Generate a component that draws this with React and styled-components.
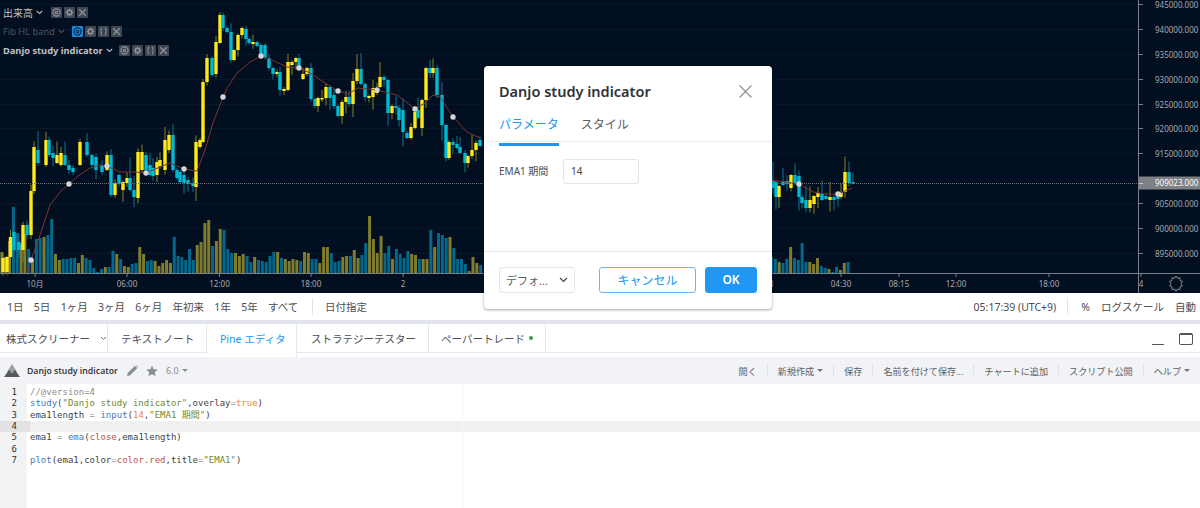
import React from "react";
import styled, { createGlobalStyle } from "styled-components";

const SANS = `"Noto Sans", "Noto Sans CJK JP", sans-serif`;
const MONO = `"DejaVu Sans Mono", "Noto Sans CJK JP", monospace`;

const Global = createGlobalStyle`
  html, body { margin: 0; padding: 0; background: #fff; }
  body { font-family: ${SANS}; overflow: hidden; }
  * { box-sizing: border-box; }
`;

/* [x, top, bottom, colour] read from the picture */
const CANDLES = [
  [3,258,272,"y"],[7,257,272,"y"],[10.5,237,257,"y"],[14,232,250,"c"],[19,242,250,"c"],[23,225,250,"y"],[27,225,235,"c"],[31,191,235,"y"],
  [34,147,191,"y"],[38,150,163,"c"],[46,140,165,"y"],[49,140,155,"c"],[53,153,158,"c"],[57,155,163,"y"],[61,153,165,"y"],[65,155,165,"c"],[69,165,170,"c"],[73,168,172,"c"],
  [80,142,165,"y"],[87,142,155,"c"],[92,155,165,"c"],[96,157,170,"c"],[102,165,172,"c"],[107,155,170,"y"],[111,155,195,"c"],[115,183,195,"y"],[119,175,184,"c"],[123,182,190,"y"],[127,178,183,"y"],[130,178,190,"c"],[134,190,197,"c"],
  [138,152,198,"y"],[142,152,170,"y"],[146,155,170,"c"],[150,165,175,"c"],[153,168,176,"c"],[157,162,175,"y"],[160,160,166,"y"],[165,140,170,"y"],[169,135,150,"y"],[173,135,170,"c"],[177,170,178,"c"],[180,172,182,"c"],[184,175,183,"c"],[188,180,184,"c"],[193,183,186,"c"],
  [196,142,187,"y"],[200,140,147,"y"],[203,82,142,"y"],[207,58,82,"y"],[212,58,75,"c"],[216,42,74,"y"],[220,15,43,"y"],[223,15,28,"c"],[227,28,32,"c"],[231,32,60,"c"],[234,50,60,"y"],[238,35,50,"y"],[242,28,35,"y"],[246,29,39,"c"],[249,39,43,"c"],[253,42,44,"y"],[257,42,46,"c"],[261,45,57,"c"],[265,45,58,"c"],[269,58,68,"c"],[273,68,74,"c"],[277,72,74,"y"],[280,72,90,"c"],[284,89,91,"y"],[288,62,90,"y"],[292,62,65,"y"],[296,58,62,"y"],[299,58,68,"c"],[303,74,79,"y"],[307,68,74,"y"],
  [311,68,99,"c"],[315,99,106,"c"],[318,98,106,"y"],[322,98,99,"y"],[326,87,98,"y"],[330,87,98,"c"],[334,95,106,"c"],[338,106,116,"c"],[342,102,116,"y"],[346,97,102,"y"],[349,97,104,"c"],[353,81,104,"y"],[357,69,81,"y"],[361,69,84,"c"],[365,84,97,"c"],[369,96,98,"y"],[373,88,97,"y"],[377,88,93,"y"],[380,77,87,"y"],[384,77,80,"c"],[388,80,113,"c"],[392,106,113,"y"],[396,106,108,"c"],[399,108,120,"c"],
  [403,110,132,"c"],[407,133,138,"c"],[411,127,138,"y"],[415,112,128,"y"],[418,110,118,"c"],[422,100,128,"y"],[426,68,100,"y"],[430,68,73,"c"],[433,68,73,"y"],[437,68,95,"c"],[442,95,125,"c"],[446,125,158,"c"],[449,142,158,"y"],[453,142,145,"c"],[457,144,148,"c"],[460,147,153,"c"],[465,153,163,"c"],[468,156,163,"y"],[472,150,156,"y"],[476,143,150,"y"],[480,140,146,"c"],
  [773,181,188,"c"],[776,182,197,"c"],[779,186,197,"y"],[783,181,185,"c"],[787,181,184,"c"],[791,175,188,"y"],[795,175,183,"c"],[799,176,197,"c"],[802,197,203,"c"],[806,200,208,"c"],[810,200,208,"y"],[814,196,204,"y"],[818,193,197,"y"],[822,194,200,"c"],[826,196,199,"c"],[830,197,200,"y"],[834,197,200,"c"],[838,196,199,"c"],[841,192,197,"y"],[845,172,192,"y"],[849,172,183,"c"],[853,182,183,"c"],
];

const VOL_LEFT = [22,17,33,67,41,30,40,25,15,35,36,37,39,55,20,14,15,15,16,16,11,19,16,14,6,2,5,7,7,23,20,15,8,7,10,11,27,20,13,14,13,8,11,14,11,37,18,17,14,25,14,29,32,51,54,28,33,45,44,25,21,21,18,20,18,12,17,14,13,12,18,22,22,16,15,13,15,14,13,22,21,15,15,11,27,27,21,12,13,17,18,18,24,16,19,31,58,35,21,38,21,28,15,25,20,16,23,20,19,15,15,15,44,27,41,39,36,37,26,15,15,10,3,17,11,9];
const VOL_RIGHT = [17,15,12,11,15,27,16,14,31,12,12,10,16,8,6,5,2,7,4,11,12,1];
const STEP = 3.83;

const bars = [
  ...VOL_LEFT.map((h, i) => ({ x: i * STEP + 1.9, h })),
  ...VOL_RIGHT.map((h, i) => ({ x: 771.5 + i * STEP, h })),
].filter((b) => b.x < 484 || b.x > 771);

const nearest = (x) => {
  let best = CANDLES[0];
  CANDLES.forEach((c) => { if (Math.abs(c[0] - x) < Math.abs(best[0] - x)) best = c; });
  return best[3];
};
const hash = (n) => { const v = Math.sin(n * 12.9898) * 43758.5453; return v - Math.floor(v); };

const EMA_L = "M27 275L31 260L40 235L50 205L60 192L69 184L78 176L90 168L100 165L107 166L120 172L135 172L146 173L160 167L170 163L184 169L197 171L205 150L213 123L223 97L227 88L237 73L250 62L261 56L272 60L287 67L299 68L310 73L325 83L338 91L348 94L358 88L377 90L397 95L415 109L425 103L433 95L440 97L453 117L467 132L480 138";
const EMA_R = "M772 180L785 182L799 184L813 192L825 194L838 194L852 188";
const DOTS = [[31,260],[69,184],[107,166],[146,173],[184,169],[223,97],[261,56],[299,68],[338,91],[377,90],[415,109],[453,117],[799,184],[838,194]];

const PRICES = [[4,"945000.000"],[29,"940000.000"],[54,"935000.000"],[79,"930000.000"],[104,"925000.000"],[128,"920000.000"],[153,"915000.000"],[203,"905000.000"],[228,"900000.000"],[253,"895000.000"]];
const TIMES = [[35,"10月"],[127,"06:00"],[219.5,"12:00"],[311,"18:00"],[403,"2"],[771,"3"],[841,"04:30"],[899,"08:15"],[956,"12:00"],[1049,"18:00"],[1141,"4"]];

const Page = styled.div`
  position: relative;
  width: 1200px;
  height: 508px;
  display: flex;
  flex-direction: column;
  background: #fff;
  overflow: hidden;
`;
const ChartPane = styled.div`
  position: relative;
  height: 293px;
  flex: none;
  background: #010f20;
`;
const ChartSvg = styled.svg`
  display: block;
  font-family: ${SANS};
`;
const Legend = styled.div`
  position: absolute;
  left: 3px;
  top: 3px;
  display: flex;
  flex-direction: column;
  gap: 1px;
`;
const LegendRow = styled.div`
  height: 18px;
  display: flex;
  align-items: center;
`;
const LegendName = styled.span`
  font-size: ${(p) => p.$size}px;
  font-weight: ${(p) => (p.$bold ? 700 : 400)};
  color: ${(p) => (p.$dim ? "#4c5562" : "#bfc2c8")};
`;
const LegendChevron = styled.svg`
  width: 7px;
  height: 5px;
  margin: 1px ${(p) => p.$after}px 0 3px;
  fill: none;
  stroke: ${(p) => (p.$dim ? "#4c5562" : "#bfc2c8")};
  stroke-width: 1.1;
`;
const LegendIcons = styled.div`
  display: flex;
  gap: 2px;
`;
const LegendBtn = styled.svg`
  width: 11px;
  height: 11px;
  border-radius: 1px;
  background: ${(p) => (p.$on ? "#1b87d6" : "#3f4652")};
  fill: none;
  stroke: ${(p) => (p.$on ? "#0b2a4a" : "#8f9399")};
  stroke-width: 1.1;
`;

const Eye = ({ on }) => (
  <LegendBtn viewBox="0 0 11 11" $on={on}>
    <circle cx="5.5" cy="5.5" r="3.6" />
    <circle cx="5.5" cy="5.5" r="1.3" />
  </LegendBtn>
);
const Cog = () => (
  <LegendBtn viewBox="0 0 11 11">
    <circle cx="5.5" cy="5.5" r="2.2" strokeWidth="1.6" />
    <path d="M5.5 1.5v1.4M5.5 8.1v1.4M1.5 5.5h1.4M8.1 5.5h1.4M2.7 2.7l1 1M7.3 7.3l1 1M2.7 8.3l1-1M7.3 3.7l1-1" />
  </LegendBtn>
);
const Braces = () => (
  <LegendBtn viewBox="0 0 11 11">
    <path d="M4.2 2C3 2 3.2 3 3.2 4S3 5.5 2.2 5.5C3 5.5 3.2 6 3.2 7S3 9 4.2 9M6.8 2C8 2 7.8 3 7.8 4S8 5.5 8.8 5.5C8 5.5 7.8 6 7.8 7S8 9 6.8 9" />
  </LegendBtn>
);
const Cross = () => (
  <LegendBtn viewBox="0 0 11 11">
    <path d="M2.2 2.2l6.6 6.6M8.8 2.2L2.2 8.8" strokeWidth="1.3" />
  </LegendBtn>
);
const Chevron = (p) => (
  <LegendChevron viewBox="0 0 7 5" {...p}>
    <path d="M.8 1l2.7 2.6L6.2 1" />
  </LegendChevron>
);

const Chart = () => (
  <ChartSvg width="1200" height="293" viewBox="0 0 1200 293">
    {PRICES.map(([y]) => <line key={y} x1="0" x2="1138" y1={y + 0.5} y2={y + 0.5} stroke="#091828" />)}
    {bars.map((b, i) => (
      <rect key={i} x={b.x - 1.5} y={274 - b.h} width="3" height={b.h}
        fill={nearest(b.x) === "y" ? "#7f7c2e" : "#03698c"} />
    ))}
    {CANDLES.map(([x, t, b, c], i) => {
      const up = 1 + hash(i + 1) * hash(i + 7) * 20;
      const dn = 1 + hash(i + 50) * hash(i + 9) * 16;
      return (
        <g key={i}>
          <line x1={x} x2={x} y1={Math.max(t - up, 0)} y2={b + dn} stroke={c === "y" ? "#85821f" : "#0a7590"} />
          <rect x={x - 1.7} y={t} width="3.4" height={Math.max(b - t, 1.5)} fill={c === "y" ? "#ffe91c" : "#00bad4"} />
        </g>
      );
    })}
    <line x1="0" x2="1138" y1="183.5" y2="183.5" stroke="#6d7278" strokeDasharray="1 1" />
    <path d={EMA_L} fill="none" stroke="#7b3434" />
    <path d={EMA_R} fill="none" stroke="#7b3434" />
    {DOTS.map(([x, y]) => <circle key={x} cx={x} cy={y} r="2.7" fill="#d6d6d8" />)}
    <rect x="0" y="273" width="1200" height="1" fill="#7a7f89" />
    <rect x="1138" y="0" width="1" height="293" fill="#7a7f89" />
    {PRICES.map(([y, t]) => (
      <g key={t}>
        <line x1="1139" x2="1143" y1={y + 0.5} y2={y + 0.5} stroke="#7a7f89" />
        <text x="1155" y={y + 3.5} fontSize="8" fill="#a8abb1">{t}</text>
      </g>
    ))}
    <rect x="1139" y="176.5" width="61" height="13" fill="#7d8084" />
    <line x1="1139" x2="1143" y1="183.5" y2="183.5" stroke="#c8c9cc" />
    <text x="1155" y="186" fontSize="8" fill="#fff">909023.000</text>
    {TIMES.map(([x, t]) => (
      <g key={t + x}>
        <line x1={x} x2={x} y1="274" y2="277" stroke="#7a7f89" />
        <text x={x} y="287" fontSize="8" fill="#a8abb1" textAnchor="middle">{t}</text>
      </g>
    ))}
    <path d="M1176 277.5l1.3 2.3 2.6-.6.1 2.7 2.4 1.1-1.5 2.2 1.5 2.2-2.4 1.1-.1 2.7-2.6-.6-1.3 2.3-1.3-2.3-2.6.6-.1-2.7-2.4-1.1 1.5-2.2-1.5-2.2 2.4-1.1.1-2.7 2.6.6z"
      transform="translate(0 -1.5)" fill="none" stroke="#8a8d93" />
  </ChartSvg>
);

const BottomBar = styled.div`
  height: 27px;
  flex: none;
  display: flex;
  align-items: center;
  justify-content: space-between;
  padding: 0 4px 0 7px;
  font-size: 10.5px;
  color: #4a4d55;
`;
const BarGroup = styled.div`
  display: flex;
  align-items: center;
  gap: ${(p) => p.$gap}px;
`;
const VDivider = styled.span`
  width: 1px;
  height: 17px;
  background: #e0e3eb;
  margin: 0 ${(p) => p.$mr || 0}px 0 ${(p) => p.$ml || 0}px;
`;
const Separator = styled.div`
  height: 4px;
  flex: none;
  background: #e2e4ec;
`;
const TabBar = styled.div`
  height: 29px;
  flex: none;
  display: flex;
  position: relative;
  border-bottom: 1px solid #e6e8ef;
`;
const Tab = styled.div`
  width: ${(p) => p.$w}px;
  height: ${(p) => (p.$active ? "33px" : "28px")};
  padding-left: ${(p) => p.$pad}px;
  display: flex;
  align-items: ${(p) => (p.$active ? "flex-start" : "center")};
  padding-top: ${(p) => (p.$active ? "7px" : "0")};
  gap: 4px;
  font-size: 10.5px;
  color: ${(p) => (p.$active ? "#2196f3" : "#4a4d55")};
  background: #fff;
  border-right: 1px solid #e6e8ef;
  z-index: 1;
`;
const TabChevron = styled.svg`
  width: 7px;
  height: 5px;
  margin-left: 6px;
  fill: none;
  stroke: #777;
`;
const Dot = styled.span`
  width: 4px;
  height: 4px;
  border-radius: 50%;
  background: #3c9a4c;
  margin-left: 0;
`;
const WindowIcons = styled.div`
  margin-left: auto;
  align-self: flex-start;
  height: 21px;
  display: flex;
  align-items: flex-end;
  gap: 15px;
  padding: 9px 7px 0 0;
`;
const Minimize = styled.span`
  width: 12px;
  height: 1px;
  background: #555;
`;
const Maximize = styled.span`
  width: 14px;
  height: 12px;
  border: 1px solid #555;
  border-top-width: 2px;
  border-radius: 2px;
`;
const Toolbar = styled.div`
  height: 27px;
  flex: none;
  margin-top: 4px;
  padding: 0 0 0 4px;
  display: flex;
  align-items: center;
  background: #f1f3f6;
`;
const ScriptName = styled.span`
  font-size: 8.7px;
  font-weight: 600;
  color: #3b3e45;
  margin: 0 9px 0 7px;
`;
const ToolIcon = styled.svg`
  width: ${(p) => p.$s}px;
  height: ${(p) => p.$s}px;
  fill: #8a8d93;
  margin-right: ${(p) => p.$after}px;
`;
const Version = styled.span`
  font-size: 9px;
  color: #8a8d93;
`;
const Caret = styled.span`
  width: 0;
  height: 0;
  margin-left: 3px;
  border-left: 3px solid transparent;
  border-right: 3px solid transparent;
  border-top: 3px solid ${(p) => p.$c || "#777"};
`;
const Menu = styled.div`
  margin-left: auto;
  display: flex;
  align-items: center;
`;
const MenuItem = styled.div`
  display: flex;
  align-items: center;
  height: 13px;
  padding: 0 10px;
  font-size: 9.1px;
  color: #5a5d65;
  border-left: ${(p) => (p.$first ? "0" : "1px solid #dfe1e7")};
`;
const Editor = styled.div`
  flex: 1;
  position: relative;
  font-family: ${MONO};
  font-size: 9px;
  line-height: 11.35px;
  padding-top: 3px;
  background: linear-gradient(to right, #f2f3f5 27px, #fff 27px);
`;
const PrintMargin = styled.span`
  position: absolute;
  left: 462px;
  top: 0;
  bottom: 0;
  width: 1px;
  background: #f5f5f5;
`;
const CodeLine = styled.div`
  display: flex;
  height: 11.35px;
  white-space: pre;
  background: ${(p) => (p.$active ? "#f0f0f0" : "transparent")};
`;
const LineNo = styled.span`
  width: 30px;
  flex: none;
  padding-right: 13px;
  text-align: right;
  color: #333;
  background: ${(p) => (p.$active ? "#e2e2e2" : "transparent")};
`;
const Tok = styled.span`
  color: ${(p) => ({ c: "#8c8c8c", f: "#4778b5", s: "#75871f", n: "#e28a3a", r: "#c4504c", o: "#9a9a9a", d: "#444" }[p.$k])};
`;

const Modal = styled.div`
  position: absolute;
  left: 484px;
  top: 66px;
  width: 288px;
  height: 243px;
  display: flex;
  flex-direction: column;
  background: #fff;
  border-radius: 4px;
  box-shadow: 0 1px 3px rgba(0, 0, 0, 0.35);
  z-index: 5;
`;
const ModalHead = styled.div`
  height: 50px;
  flex: none;
  display: flex;
  align-items: center;
  justify-content: space-between;
  padding: 0 20px 0 15px;
`;
const ModalTitle = styled.div`
  font-size: 14.5px;
  font-weight: 600;
  color: #2f3238;
`;
const CloseIcon = styled.svg`
  width: 13px;
  height: 13px;
  fill: none;
  stroke: #8a8d93;
  stroke-width: 1.1;
`;
const ModalTabs = styled.div`
  height: 26px;
  flex: none;
  display: flex;
  gap: 22px;
  padding: 0 15px;
  border-bottom: 1px solid #eceef2;
`;
const ModalTab = styled.div`
  height: 30px;
  font-size: 12px;
  line-height: 18px;
  color: ${(p) => (p.$active ? "#2196f3" : "#5a5d65")};
  border-bottom: ${(p) => (p.$active ? "3px solid #2196f3" : "0")};
`;
const ModalBody = styled.div`
  flex: 1;
  display: flex;
  align-items: flex-start;
  padding: 17px 15px 0;
  gap: 14px;
`;
const FieldLabel = styled.label`
  width: 50px;
  font-size: 10px;
  line-height: 25px;
  color: #4a4d55;
  white-space: nowrap;
`;
const NumberBox = styled.div`
  width: 76px;
  height: 25px;
  padding-left: 7px;
  border: 1px solid #e3e5ec;
  border-radius: 3px;
  font-size: 10px;
  line-height: 23px;
  color: #444;
`;
const ModalFoot = styled.div`
  height: 58px;
  flex: none;
  display: flex;
  align-items: center;
  padding: 0 15px 2px;
  border-top: 1px solid #e6e8ef;
`;
const SelectBox = styled.div`
  width: 76px;
  height: 26px;
  display: flex;
  align-items: center;
  justify-content: space-between;
  padding: 0 6px;
  border: 1px solid #e3e5ec;
  border-radius: 3px;
  font-size: 11px;
  color: #5a5d65;
`;
const SelectChevron = styled.svg`
  width: 9px;
  height: 6px;
  fill: none;
  stroke: #444;
  stroke-width: 1.2;
`;
const Button = styled.button`
  height: 26px;
  width: ${(p) => p.$w}px;
  margin-left: ${(p) => p.$ml}px;
  padding: 0;
  font-family: ${SANS};
  font-size: 12px;
  font-weight: ${(p) => (p.$primary ? 600 : 400)};
  color: ${(p) => (p.$primary ? "#fff" : "#2196f3")};
  background: ${(p) => (p.$primary ? "#2196f3" : "#fff")};
  border: 1px solid ${(p) => (p.$primary ? "#2196f3" : "#6cb6f5")};
  border-radius: 3px;
`;

const T = ({ k, children }) => <Tok $k={k}>{children}</Tok>;
const CODE = [
  [<T k="c" key="a">//@version=4</T>],
  [<T k="f" key="a">study</T>, <T k="d" key="b">(</T>, <T k="s" key="c">"Danjo study indicator"</T>, <T k="d" key="d">,overlay</T>, <T k="o" key="e">=</T>, <T k="n" key="f">true</T>, <T k="d" key="g">)</T>],
  [<T k="d" key="a">ema1length </T>, <T k="o" key="b">=</T>, <T k="d" key="c"> </T>, <T k="f" key="d">input</T>, <T k="d" key="e">(</T>, <T k="n" key="f">14</T>, <T k="d" key="g">,</T>, <T k="s" key="h">"EMA1 期間"</T>, <T k="d" key="i">)</T>],
  [],
  [<T k="d" key="a">ema1 </T>, <T k="o" key="b">=</T>, <T k="d" key="c"> </T>, <T k="f" key="d">ema</T>, <T k="d" key="e">(</T>, <T k="r" key="f">close</T>, <T k="d" key="g">,ema1length)</T>],
  [],
  [<T k="f" key="a">plot</T>, <T k="d" key="b">(ema1,color</T>, <T k="o" key="c">=</T>, <T k="r" key="d">color.red</T>, <T k="d" key="e">,title</T>, <T k="o" key="f">=</T>, <T k="s" key="g">"EMA1"</T>, <T k="d" key="h">)</T>],
];

const RANGES = ["1日", "5日", "1ヶ月", "3ヶ月", "6ヶ月", "年初来", "1年", "5年", "すべて"];
const TABS = [
  { t: "テキストノート", w: 99, pad: 13 },
  { t: "Pine エディタ", w: 90, pad: 13, active: true },
  { t: "ストラテジーテスター", w: 132, pad: 14 },
];
const MENU = ["開く", "新規作成", "保存", "名前を付けて保存...", "チャートに追加", "スクリプト公開", "ヘルプ"];

export default function App() {
  return (
    <Page>
      <Global />
      <ChartPane>
        <Chart />
        <Legend>
          <LegendRow>
            <LegendName $size={10}>出来高</LegendName>
            <Chevron $after={8} />
            <LegendIcons><Eye /><Cog /><Cross /></LegendIcons>
          </LegendRow>
          <LegendRow>
            <LegendName $size={9.3} $dim>Fib HL band</LegendName>
            <Chevron $after={7} $dim />
            <LegendIcons><Eye on /><Cog /><Braces /><Cross /></LegendIcons>
          </LegendRow>
          <LegendRow>
            <LegendName $size={9.3} $bold>Danjo study indicator</LegendName>
            <Chevron $after={6} />
            <LegendIcons><Eye /><Cog /><Braces /><Cross /></LegendIcons>
          </LegendRow>
        </Legend>
      </ChartPane>

      <BottomBar>
        <BarGroup $gap={10.3}>
          {RANGES.map((r) => <span key={r}>{r}</span>)}
          <VDivider $ml={3} $mr={2} />
          <span>日付指定</span>
        </BarGroup>
        <BarGroup $gap={11}>
          <span>05:17:39 (UTC+9)</span>
          <VDivider $mr={2} />
          <span>%</span>
          <span>ログスケール</span>
          <span>自動</span>
        </BarGroup>
      </BottomBar>
      <Separator />

      <TabBar>
        <Tab $w={108} $pad={6}>
          株式スクリーナー
          <TabChevron viewBox="0 0 7 5"><path d="M1 1l2.5 2.5L6 1" /></TabChevron>
        </Tab>
        {TABS.map((t) => <Tab key={t.t} $w={t.w} $pad={t.pad} $active={t.active}>{t.t}</Tab>)}
        <Tab $w={117} $pad={12}>ペーパートレード<Dot /></Tab>
        <WindowIcons><Minimize /><Maximize /></WindowIcons>
      </TabBar>

      <Toolbar>
        <svg width="16" height="13" viewBox="0 0 16 13">
          <path d="M8 0L13 8H3z" fill="#9a9da3" />
          <path d="M0 13L5 6l3 3 3-3 5 7z" fill="#55585f" />
        </svg>
        <ScriptName>Danjo study indicator</ScriptName>
        <ToolIcon viewBox="0 0 12 12" $s={11} $after={8}><path d="M0 12l.8-3.2L8.5 1l2.6 2.6-7.7 7.7zM9.2.4l.6-.4 2.2 2.2-.5.7z" /></ToolIcon>
        <ToolIcon viewBox="0 0 12 12" $s={12} $after={8}><path d="M6 .5l1.7 3.7 4 .4-3 2.7.9 4L6 9.3l-3.6 2 .9-4-3-2.7 4-.4z" /></ToolIcon>
        <Version>6.0</Version>
        <Caret $c="#8a8d93" />
        <Menu>
          {MENU.map((m, i) => (
            <MenuItem key={m} $first={i === 0}>
              {m}
              {(m === "新規作成" || m === "ヘルプ") && <Caret />}
            </MenuItem>
          ))}
        </Menu>
      </Toolbar>

      <Editor>
        <PrintMargin />
        {CODE.map((tokens, i) => (
          <CodeLine key={i} $active={i === 3}>
            <LineNo $active={i === 3}>{i + 1}</LineNo>
            <span>{tokens}</span>
          </CodeLine>
        ))}
      </Editor>

      <Modal>
        <ModalHead>
          <ModalTitle>Danjo study indicator</ModalTitle>
          <CloseIcon viewBox="0 0 13 13"><path d="M.5.5l12 12M12.5.5l-12 12" /></CloseIcon>
        </ModalHead>
        <ModalTabs>
          <ModalTab $active>パラメータ</ModalTab>
          <ModalTab>スタイル</ModalTab>
        </ModalTabs>
        <ModalBody>
          <FieldLabel>EMA1 期間</FieldLabel>
          <NumberBox>14</NumberBox>
        </ModalBody>
        <ModalFoot>
          <SelectBox>
            デフォ...
            <SelectChevron viewBox="0 0 9 6"><path d="M1 1l3.5 3.5L8 1" /></SelectChevron>
          </SelectBox>
          <Button $w={97} $ml={24}>キャンセル</Button>
          <Button $w={52} $ml={9} $primary>OK</Button>
        </ModalFoot>
      </Modal>
    </Page>
  );
}
